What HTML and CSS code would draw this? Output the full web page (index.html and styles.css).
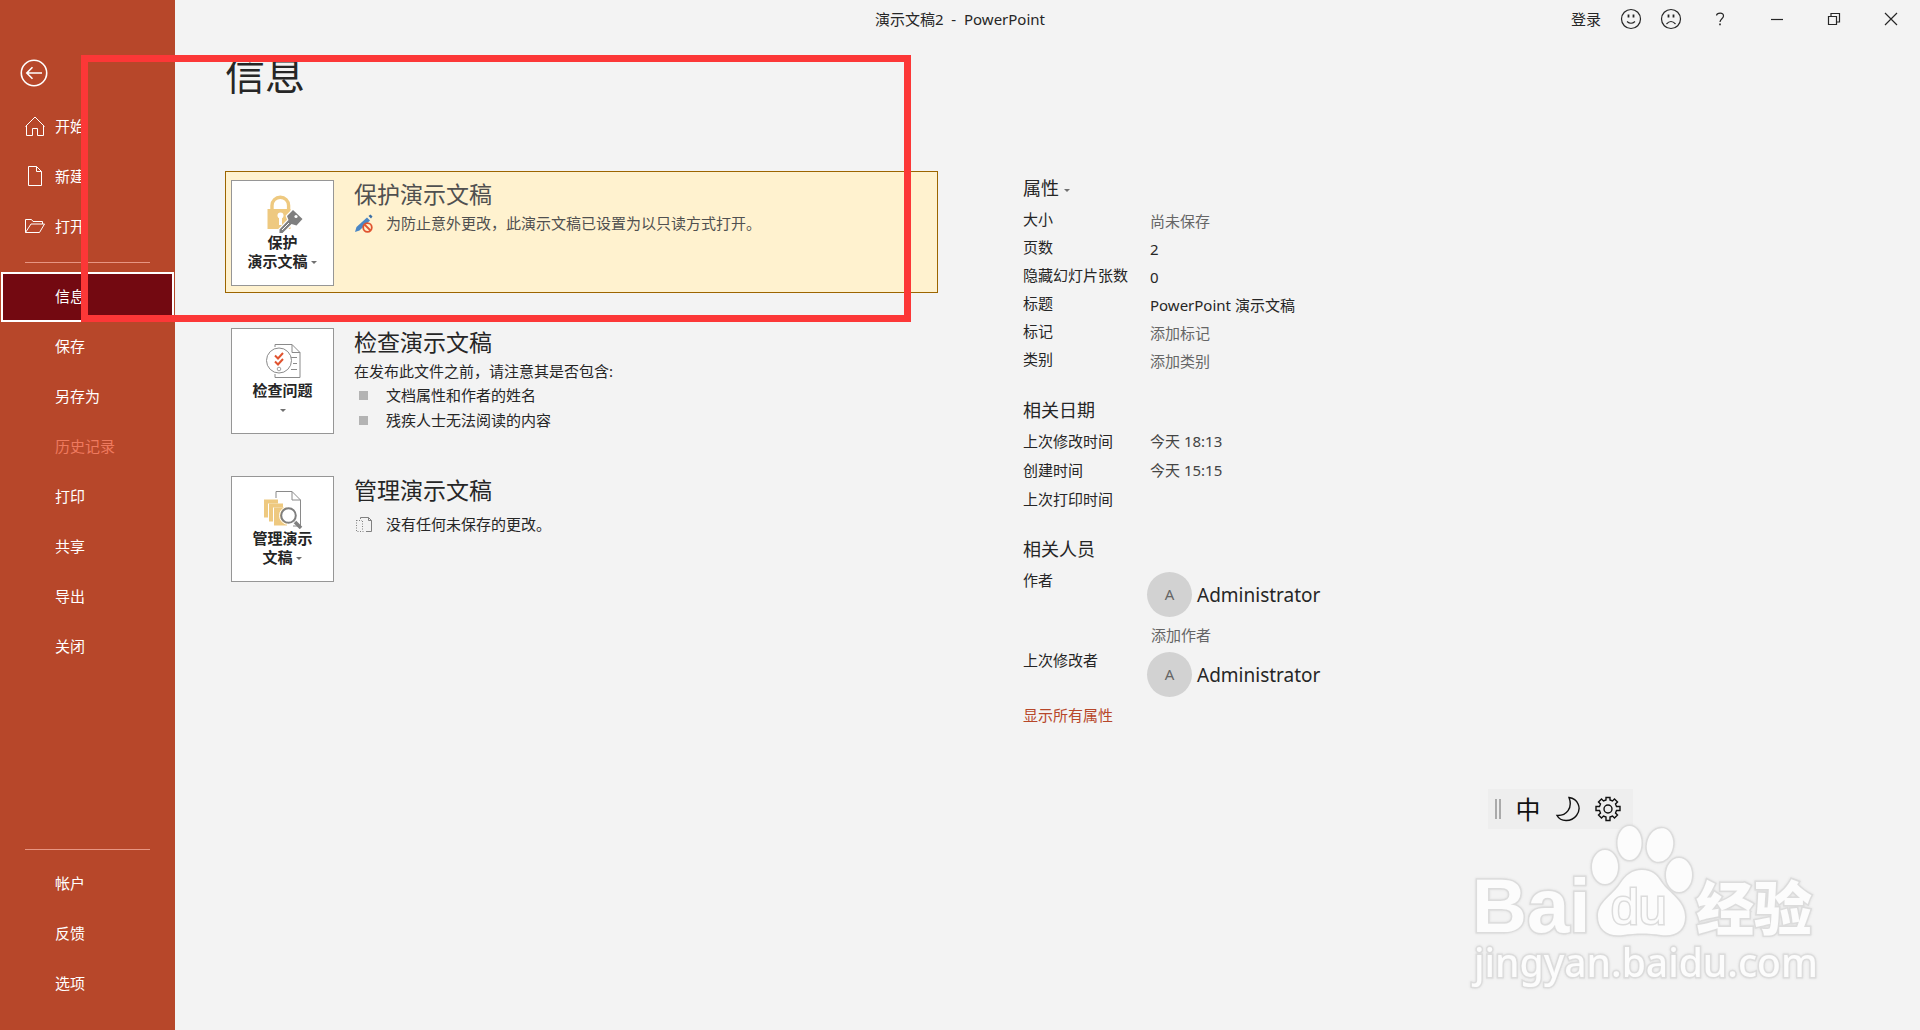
FILE: index.html
```html
<!DOCTYPE html>
<html lang="zh-CN">
<head>
    <meta charset="UTF-8">
    <meta name="viewport" content="width=device-width, initial-scale=1.0">
    <title>演示文稿2 - PowerPoint</title>
    <link rel="stylesheet" href="styles.css">
</head>
<body>
    <div class="app">
        <nav class="sidebar">
            <button type="button" class="back" aria-label="返回">
                <svg width="28" height="28" viewBox="0 0 28 28"><circle cx="14" cy="14" r="12.7"/><path d="M22 14H7M12.5 8.3 6.8 14l5.7 5.7"/></svg>
            </button>
            <button type="button" class="nav-item">
                <svg width="20" height="20" viewBox="0 0 20 20"><path d="M.5 10.5 10 1l9.500 9.500M1.500 9.500v10h6v-7h5v7h6v-10"/></svg>
                开始
            </button>
            <button type="button" class="nav-item">
                <svg width="20" height="20" viewBox="0 0 20 20"><path d="M3.500.5h8l5 5v14h-13zM11.500.5v5h5"/></svg>
                新建
            </button>
            <button type="button" class="nav-item">
                <svg width="20" height="20" viewBox="0 0 20 20"><path d="M.5 16.500v-13h6l1.500 2h9.500v2.500M.5 16.500l5.500-8.500h13.500l-5 8.500z"/></svg>
                打开
            </button>
            <hr>
            <button type="button" class="nav-item active" aria-current="page">信息</button>
            <button type="button" class="nav-item">保存</button>
            <button type="button" class="nav-item">另存为</button>
            <button type="button" class="nav-item" disabled>历史记录</button>
            <button type="button" class="nav-item">打印</button>
            <button type="button" class="nav-item">共享</button>
            <button type="button" class="nav-item">导出</button>
            <button type="button" class="nav-item">关闭</button>
            <div class="nav-bottom">
                <hr>
                <button type="button" class="nav-item">帐户</button>
                <button type="button" class="nav-item">反馈</button>
                <button type="button" class="nav-item">选项</button>
            </div>
        </nav>

        <main class="main">
            <h1>信息</h1>
            <div class="columns">
                <div class="cards">
                    <section class="card highlight">
                        <button type="button" class="tile">
                            <svg width="40" height="38" viewBox="0 0 40 38">
                                <path d="M9 15v-4.500a8.300 8.300 0 0 1 16.600 0V15" fill="none" stroke="#eec980" stroke-width="3.400"/>
                                <path d="M4.500 14h23v20h-23z" fill="#eec980"/>
                                <circle cx="17.500" cy="20.500" r="3" fill="#fff"/><path d="M16 21h3v9h-3z" fill="#fff"/>
                                <g stroke="#fff" stroke-width="2.500"><path d="m30 15 9.500 9-6 6.500-5-1.500L19.500 38h-3v-3.500l9-9.500-1.500-4z" fill="#7f7f7f" paint-order="stroke"/></g>
                                <circle cx="33" cy="21.500" r="1.600" fill="#fff"/>
                                <path d="m19 35 7-7" stroke="#fff" fill="none"/>
                            </svg>
                            <span>保护</span>
                            <span>演示文稿 <i class="arrow"></i></span>
                        </button>
                        <div class="card-text">
                            <h2>保护演示文稿</h2>
                            <p class="with-icon">
                                <svg width="20" height="20" viewBox="0 0 20 20">
                                    <path d="m1 18 1.500-5L13 3.500l3 3L5.500 16.500z" fill="#4a86c5"/><path d="m14.500 2 2-1.500 2 2-1.500 2z" fill="#3b6ea5"/>
                                    <circle cx="13.500" cy="13.500" r="4.300" fill="#fff2cf" stroke="#e0532f" stroke-width="1.800"/><path d="m10.500 10.500 6 6" stroke="#e0532f" stroke-width="1.800"/>
                                </svg>
                                为防止意外更改，此演示文稿已设置为以只读方式打开。
                            </p>
                        </div>
                    </section>

                    <section class="card">
                        <button type="button" class="tile">
                            <svg width="40" height="38" viewBox="0 0 40 38" fill="none" stroke="#8a8a8a">
                                <path d="M12 4V1.500h17l8 8v25H12V31" fill="#fff"/><path d="M29 1.500v8h8M28 14.500h6M30 20.500h4M28 26.500h6"/>
                                <circle cx="16" cy="17.500" r="12.500" fill="#fff"/>
                                <circle cx="16" cy="26" r="1.800" stroke-width=".8"/>
                                <path d="m12 12.500 3 3 5-5.500M12 18.500l3 3 5-5.500" stroke="#e0532f" stroke-width="2"/>
                            </svg>
                            <span>检查问题</span>
                            <span><i class="arrow"></i></span>
                        </button>
                        <div class="card-text">
                            <h2>检查演示文稿</h2>
                            <p>在发布此文件之前，请注意其是否包含:</p>
                            <ul>
                                <li>文档属性和作者的姓名</li>
                                <li>残疾人士无法阅读的内容</li>
                            </ul>
                        </div>
                    </section>

                    <section class="card">
                        <button type="button" class="tile">
                            <svg width="40" height="38" viewBox="0 0 40 38">
                                <path d="M13 7V.5h16l8.500 8.500v26H30M29 .5V9h8.500" fill="none" stroke="#8a8a8a"/>
                                <path d="M1 8.500h14v4H5v14H1z" fill="#eec980"/><path d="M6 12.500h14v4H10v14H6z" fill="#eec980"/><path d="M11 16.500h13v18H11z" fill="#eec980"/>
                                <path d="M31.500 30.500 38 37" stroke="#7f7f7f" stroke-width="3.500"/>
                                <circle cx="25.500" cy="24.500" r="9" fill="none" stroke="#fff"/>
                                <circle cx="25.500" cy="24.500" r="7.300" fill="#fff" stroke="#7f7f7f" stroke-width="2"/>
                            </svg>
                            <span>管理演示</span>
                            <span>文稿 <i class="arrow"></i></span>
                        </button>
                        <div class="card-text">
                            <h2>管理演示文稿</h2>
                            <p class="with-icon spaced">
                                <svg width="20" height="20" viewBox="0 0 20 20" fill="none" stroke="#808080">
                                    <path d="M6.500 4V2.500h8l3 3v11H12M14.500 2.500v3h3"/><path d="M2.500 5v11.500H10M2.500 5.500H8M8.500 6v10" stroke-dasharray="1 1.500"/>
                                </svg>
                                没有任何未保存的更改。
                            </p>
                        </div>
                    </section>
                </div>

                <aside class="props">
                    <h3><button type="button" class="props-menu">属性 <i class="arrow"></i></button></h3>
                    <dl class="details">
                        <dt>大小</dt><dd class="muted">尚未保存</dd>
                        <dt>页数</dt><dd>2</dd>
                        <dt>隐藏幻灯片张数</dt><dd>0</dd>
                        <dt><label for="title">标题</label></dt><dd><input id="title" type="text" value="PowerPoint 演示文稿"></dd>
                        <dt><label for="tags">标记</label></dt><dd><input id="tags" type="text" placeholder="添加标记"></dd>
                        <dt><label for="category">类别</label></dt><dd><input id="category" type="text" placeholder="添加类别"></dd>
                    </dl>
                    <h3>相关日期</h3>
                    <dl class="dates">
                        <dt>上次修改时间</dt><dd>今天 18:13</dd>
                        <dt>创建时间</dt><dd>今天 15:15</dd>
                        <dt>上次打印时间</dt><dd></dd>
                    </dl>
                    <h3>相关人员</h3>
                    <dl class="people">
                        <dt><label for="author">作者</label></dt>
                        <dd>
                            <div class="person"><span class="avatar">A</span>Administrator</div>
                            <input id="author" type="text" placeholder="添加作者">
                        </dd>
                        <dt>上次修改者</dt>
                        <dd><div class="person"><span class="avatar">A</span>Administrator</div></dd>
                    </dl>
                    <a class="show-all" href="#">显示所有属性</a>
                </aside>
            </div>
        </main>
    </div>

    <header class="titlebar">
        <div class="doc-title">演示文稿2&nbsp; -&nbsp; PowerPoint</div>
        <div class="window-tools">
            <button type="button" class="login">登录</button>
            <button type="button" class="face" aria-label="笑脸">
                <svg width="22" height="22" viewBox="0 0 22 22"><circle cx="11" cy="11" r="9.500"/><path d="M8.500 6.500v3M13.500 6.500v3" stroke-width="1.800"/><path d="M7 13.500q4 3.500 8 0"/></svg>
            </button>
            <button type="button" class="face" aria-label="哭脸">
                <svg width="22" height="22" viewBox="0 0 22 22"><circle cx="11" cy="11" r="9.500"/><path d="M8.500 6.500v3M13.500 6.500v3" stroke-width="1.800"/><path d="M6.500 16q4.500-5 9 0"/></svg>
            </button>
            <button type="button" class="win" aria-label="帮助">
                <svg width="14" height="14" viewBox="0 0 14 14"><path d="M3.500 3.500C4 .5 10.500.2 10.500 4c0 2.500-3.500 3-3.500 6"/><path d="M7 11.500v1.700" stroke-width="1.600"/></svg>
            </button>
            <button type="button" class="win" aria-label="最小化">
                <svg width="14" height="14" viewBox="0 0 14 14"><path d="M1 7.500h12"/></svg>
            </button>
            <button type="button" class="win" aria-label="还原">
                <svg width="14" height="14" viewBox="0 0 14 14"><path d="M1.500 4.500h8v8h-8zM4 4V1.500h8.500V10H10"/></svg>
            </button>
            <button type="button" class="win" aria-label="关闭窗口">
                <svg width="14" height="14" viewBox="0 0 14 14"><path d="m1 1 12 12M13 1 1 13"/></svg>
            </button>
        </div>
    </header>

    <div class="marker"></div>

    <!-- input method bar -->
    <div class="ime">
        <span class="grip"></span>
        <span class="ime-lang">中</span>
        <svg width="26" height="26" viewBox="0 0 26 26"><path d="M14 1.500c9 1 13 11 7.500 18S5.500 26 2 19.500C11.500 20 18 12 14 1.500z"/></svg>
        <svg width="26" height="26" viewBox="0 0 26 26"><circle cx="13" cy="13" r="4"/><path d="M11 4V1.500h4V4l2.500 1 2-2 3 3-2 2 1 2.500H25v4h-3.500l-1 2.500 2 2-3 3-2-2-2.500 1v3.500h-4V21l-2.500-1-2 2-3-3 2-2-1-2.500H1v-4h3.500l1-2.500-2-2 3-3 2 2z"/></svg>
    </div>

    <svg class="watermark" width="360" height="190" viewBox="0 0 360 190" aria-label="百度经验">
        <text class="wm-bai" x="12" y="122">Bai</text>
        <g>
            <ellipse cx="145" cy="57" rx="13" ry="17"/>
            <ellipse cx="169.500" cy="33" rx="12" ry="17"/>
            <ellipse cx="200" cy="35" rx="13" ry="17" transform="rotate(12 200 35)"/>
            <ellipse cx="219" cy="65" rx="13" ry="17"/>
            <path d="M182 60c10 0 15 5 20 13 7 10 23 18 23 34 0 13-9 20-24 18-13-2-25-2-38 0-16 2-25-6-25-19 0-14 14-20 22-32 6-9 12-14 22-14z"/>
        </g>
        <text class="wm-du" x="151" y="114">du</text>
        <text class="wm-cn" x="236" y="120">经验</text>
        <text class="wm-url" x="14" y="167">jingyan.baidu.com</text>
    </svg>
</body>
</html>
```

FILE: styles.css
```css
* { box-sizing: border-box; }
body { margin: 0; background: #f3f3f3; color: #262626; font: 15px/24px "Noto Sans", "Noto Sans CJK SC", sans-serif; }
button, input { font: inherit; color: inherit; background: none; border: 0; padding: 0; margin: 0; }
button { cursor: pointer; }
h1, h2, h3, p, ul, dl, dd { margin: 0; padding: 0; font-weight: normal; }
svg { display: block; flex: none; }
.app { display: flex; min-height: 100vh; }

/* left menu */
.sidebar { display: flex; flex-direction: column; width: 175px; flex: none; padding: 44px 0 21px; background: #b7472a; color: #fff; }
.sidebar svg { fill: none; stroke: #fff; }
.back { height: 58px; padding-left: 20px; }
.back svg { stroke-width: 1.6; }
.nav-item { display: flex; align-items: center; gap: 10px; width: 100%; height: 50px; padding: 0 0 2px 55px; text-align: left; }
.nav-item svg { margin-left: -30px; }
.nav-item:disabled { color: #ef7a5f; }
.nav-item.active { background: #730911; border: 2px solid #fff; width: 173px; margin-left: 1px; padding-left: 52px; }
.sidebar hr { height: 1px; width: 125px; margin: 10px 25px 9px; border: 0; background: #e79582; }
.nav-bottom { margin-top: auto; }

/* title bar */
.titlebar { position: absolute; top: 0; left: 175px; right: 0; height: 40px; }
.doc-title { margin-left: -175px; line-height: 38px; text-align: center; }
.window-tools { position: absolute; top: 0; right: 1px; display: flex; height: 38px; }
.window-tools button { display: flex; align-items: center; justify-content: center; }
.window-tools svg { fill: none; stroke: #262626; stroke-width: 1.2; }
.login { margin-right: 10px; }
.face { width: 40px; }
.win { width: 57px; }

.main { flex: 1; padding: 52px 50px 0; }
h1 { font-size: 40px; line-height: 46px; margin-bottom: 73px; }
.columns { display: grid; grid-template-columns: minmax(0, 713px) 1fr; gap: 85px; }
.cards { display: flex; flex-direction: column; gap: 26px; }
.card { display: flex; gap: 20px; padding: 8px 5px 6px; border: 1px solid transparent; }
.highlight { background: #fff2cf; border-color: #9c6500; color: #505050; }
.tile { display: flex; flex-direction: column; align-items: center; flex: none; width: 103px; height: 106px; padding-top: 14px; border: 1px solid #969696; background: #fff; color: #262626; font-weight: bold; line-height: 19px; }
.tile span { min-height: 19px; }
.arrow { display: inline-block; vertical-align: 3px; border: 3px solid transparent; border-top-color: #707070; border-bottom: 0; }
.card-text h2 { font-size: 23px; line-height: 28px; margin-bottom: 3px; }
.with-icon { display: flex; gap: 12px; }
.with-icon svg { margin-top: 3px; }
.spaced { margin-top: 8px; }
ul { list-style: none; line-height: 25px; }
li { display: flex; align-items: center; gap: 18px; padding-left: 5px; }
li::before { content: ""; width: 9px; height: 9px; background: #b3b3b3; }

/* properties */
.props { padding-top: 5px; }
h3 { font-size: 18px; line-height: 24px; }
.props dl { display: grid; grid-template-columns: 124px 1fr; }
.props dd { padding-left: 3px; }
.props input { display: block; width: 100%; }
.props input::placeholder, .muted { color: #666; opacity: 1; }
.props .details { margin: 7px 0 23px; }
.details dd, .details input { line-height: 28px; height: 28px; }
.props .dates { margin: 5px 0 23px; line-height: 29px; }
.dates dd { color: #444; }
.props .people { margin: 7px 0 5px; }
.people dd { padding: 4px 0 1px; }
.person { display: flex; align-items: center; gap: 5px; font-size: 19px; }
.avatar { width: 45px; height: 45px; border-radius: 50%; background: #d2d2d2; color: #666; font-size: 15px; line-height: 45px; text-align: center; }
.people input { height: 24px; margin-top: 6px; padding-left: 4px; }
.show-all { color: #b7472a; text-decoration: none; }

/* overlays */
.marker { position: absolute; top: 55px; left: 81px; width: 830px; height: 267px; border: 7px solid #fc3737; pointer-events: none; }
.ime { position: fixed; right: 287px; bottom: 201px; display: flex; align-items: center; gap: 14px; height: 40px; width: 145px; padding-left: 7px; background: #eee; }
.ime svg { fill: none; stroke: #111; stroke-width: 1.4; }
.ime-lang { width: 26px; color: #111; font-size: 25px; line-height: 36px; text-align: center; }
.grip { width: 6px; height: 20px; border: solid #aaa; border-width: 0 2px; }
.watermark { position: fixed; right: 100px; bottom: 30px; fill: #fcfcfc; stroke: #dcdcdc; stroke-width: 3px; paint-order: stroke; filter: drop-shadow(0 0 1px #ddd); pointer-events: none; }
.wm-bai { font: bold 76px "Liberation Sans", sans-serif; }
.wm-du { font: 50px "Liberation Sans", sans-serif; }
.wm-cn { font: 900 58px "Noto Sans CJK SC", sans-serif; }
.wm-url { font: 500 39px "Noto Sans", sans-serif; }
```
